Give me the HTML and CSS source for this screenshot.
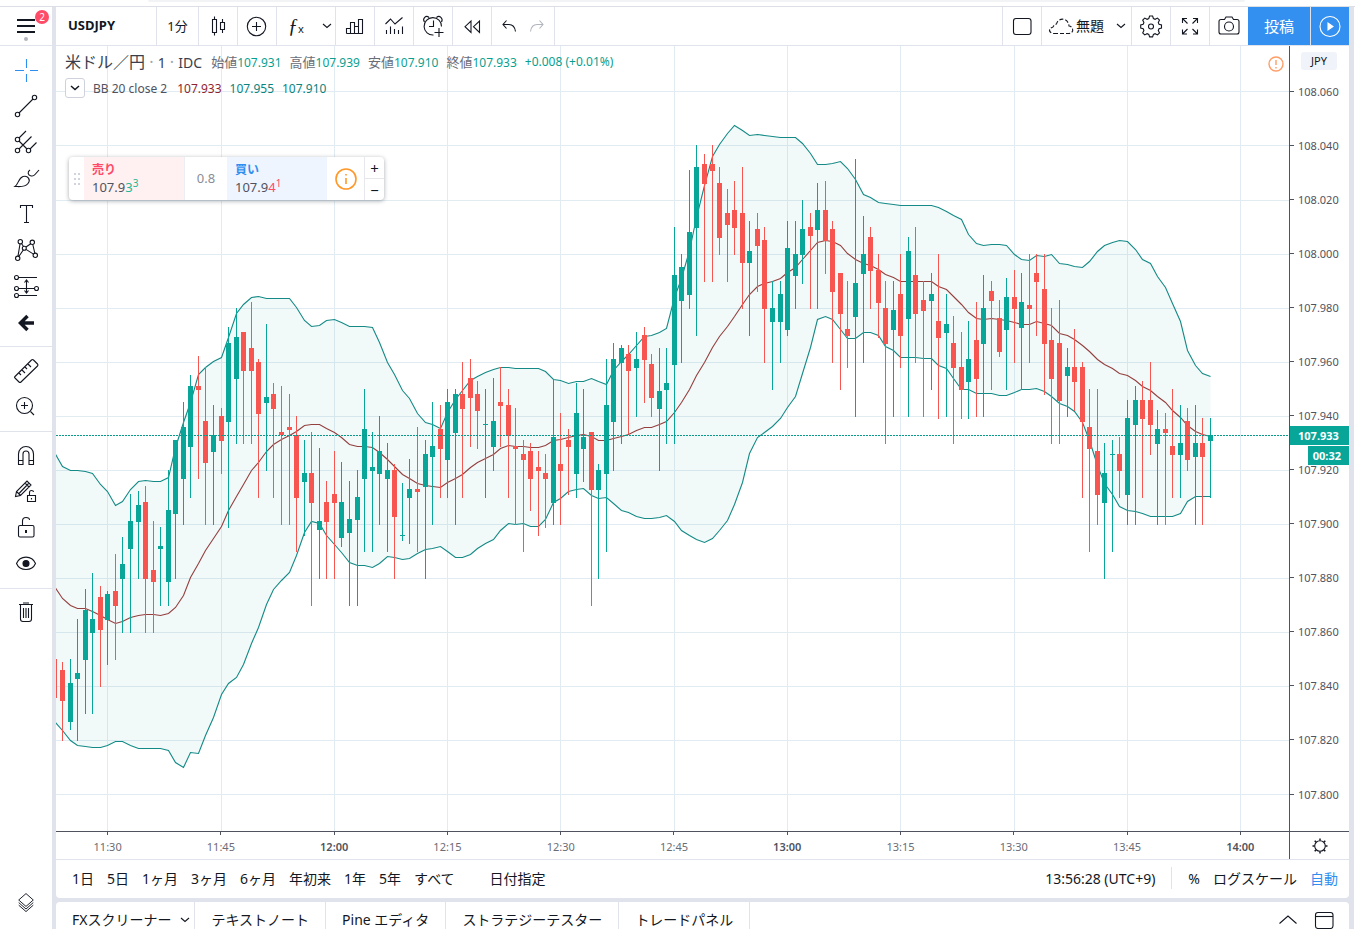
FILE: index.html
```html
<!DOCTYPE html>
<html lang="ja">
<head>
<meta charset="utf-8">
<title>USDJPY</title>
<link rel="stylesheet" href="styles.css">
</head>
<body>
<div class="page-top"><span></span></div>
<div class="app">
  <nav class="sidebar" aria-label="描画ツール">
    <div class="menu-cell">
      <button class="menu" aria-label="メニュー"><svg class="ic" viewBox="0 0 28 28"><path d="M5 8h18M5 14h18M5 20h18" stroke-width="2"/></svg><span class="badge">2</span></button>
      <i class="dot"></i>
    </div>
    <div class="tools">
      <button aria-label="十字"><svg class="ic blue" viewBox="0 0 28 28"><path d="M3 14.500h9M18 14.500h8M14.500 3v9M14.500 18v8"/></svg></button>
      <button aria-label="トレンドライン"><svg class="ic" viewBox="0 0 28 28"><circle cx="22.500" cy="5.500" r="2.200"/><circle cx="5.500" cy="22.500" r="2.200"/><path d="M7 21L21 7"/></svg></button>
      <button aria-label="ピッチフォーク"><svg class="ic" viewBox="0 0 28 28"><circle cx="5.500" cy="11.500" r="2.200"/><circle cx="5.500" cy="22.500" r="2.200"/><circle cx="16.500" cy="22.500" r="2.200"/><path d="M7 13l8 8M7 10l7-7M7 21L19.500 8.500M18 21l6.500-6.500"/></svg></button>
      <button aria-label="ブラシ"><svg class="ic" viewBox="0 0 28 28"><path d="M3 22.500C6.500 20 6.500 14 11 12.500c5-1.500 8 3.500 5 7-3 4-8 3-13 3zM18 6c-3 2-2 5 .5 5.700 2 .6 3.500 0 4.500-1.200l4-4.500"/></svg></button>
      <button aria-label="テキスト"><svg class="ic" viewBox="0 0 28 28"><path d="M8.500 8V5.500h12V8M14.500 5.500v17M12 22.500h5"/></svg></button>
      <button aria-label="パターン"><svg class="ic" viewBox="0 0 28 28"><circle cx="8.300" cy="5.700" r="2.200"/><circle cx="20.300" cy="6.300" r="2.200"/><circle cx="12.300" cy="12.300" r="2"/><circle cx="5.700" cy="22.300" r="2.200"/><circle cx="23.300" cy="19.300" r="2.200"/><path d="M8 8L6 20M9.500 7.500l2 3M14 11l4.800-3.300M20.800 8.500l2 8.600M11.300 14l-4.500 6.500M14 13.400l7.500 4.700"/></svg></button>
      <button aria-label="予測"><svg class="ic" viewBox="0 0 28 28"><circle cx="4.500" cy="5.500" r="2"/><circle cx="4.500" cy="16.500" r="2"/><circle cx="24.500" cy="16.500" r="2"/><circle cx="4.500" cy="23.500" r="2"/><path d="M6.500 5.500H25M6.500 16.500h16M6.500 23.500H25M14.500 8v13M12.500 10.500l2-2.500 2 2.500M12.500 18.500l2 2.500 2-2.500"/></svg></button>
      <button aria-label="戻る"><svg class="ic" viewBox="0 0 28 28"><path d="M15.500 8L8.500 15l7 7M9 15h13" stroke-width="3.500"/></svg></button>
    </div>
    <div class="tools">
      <button aria-label="定規"><svg class="ic" viewBox="0 0 28 28"><path d="M3 20.500L19.500 4q1-1 2 0l4 4q1 1 0 2L9 26q-1 1-2 0l-4-4q-1-.7 0-1.500zM7 17l2 2M10 14l3 3M13 11l2 2M16 8l3 3"/></svg></button>
      <button aria-label="ズームイン"><svg class="ic" viewBox="0 0 28 28"><circle cx="12.500" cy="13.500" r="8"/><path d="M9 13.500h7M12.500 10v7M18.500 19.500l3.500 3.500"/></svg></button>
    </div>
    <div class="tools">
      <button aria-label="マグネット"><svg class="ic" viewBox="0 0 28 28"><path d="M6.500 23.500V13a7.500 7.500 0 0 1 15 0v10.500h-4.500V13a2.800 2.800 0 0 0-6 0v10.500zM6.500 19.500H11M17 19.500h4.500"/></svg></button>
      <button aria-label="描画モード"><svg class="ic" viewBox="0 0 28 28"><path d="M3.500 19.500l1-5L15 4l4 4L8.500 18.500zM4.500 14.500l4 4M7 16.500L17 6M13 6l4 4M15.500 18.500h8v6h-8zM17.500 18.500v-3q0-2 2-2t2 1.500M19.500 21v1.500"/></svg></button>
      <button aria-label="ロック"><svg class="ic" viewBox="0 0 28 28"><rect x="6.500" y="12.500" width="15.500" height="11.500" rx="1.500"/><path d="M10.500 12.500V8q0-3.500 3.500-3.500T17.500 7"/><path d="M14 17v3" stroke-width="2"/></svg></button>
      <button aria-label="表示"><svg class="ic" viewBox="0 0 28 28"><path d="M4.500 14.500C8 6 20 6 23.500 14.500 20 22.500 8 22.500 4.500 14.500z"/><circle cx="14" cy="14.500" r="3" class="solid"/></svg></button>
    </div>
    <div class="tools">
      <button aria-label="削除"><svg class="ic" viewBox="0 0 28 28"><path d="M7 6.500h14M11 5h6M8.500 7v14q0 2.500 2.500 2.500h6q2.500 0 2.500-2.500V7M11.500 10v10M14 10v10M16.500 10v10"/></svg></button>
    </div>
    <button class="layers" aria-label="オブジェクトツリー"><svg class="ic" viewBox="0 0 28 28"><path d="M14 3l8.500 7.500L14 18l-8.500-7.500zM5.500 13.500l8.500 7.500 8.500-7.500M5.500 16.500L14 24l8.500-7.500"/></svg></button>
  </nav>

  <main class="main">
    <header class="toolbar">
      <button class="symbol">USDJPY</button>
      <button class="interval">1分</button>
      <button class="sq" aria-label="チャートタイプ"><svg class="ic" viewBox="0 0 28 28"><path d="M8.500 7.500h4v13h-4zM10.500 4.500v3M10.500 20.500v3M16.500 10.500h4v7h-4zM18.500 7v3.500M18.500 17.500V21"/></svg></button>
      <button class="sq" aria-label="比較"><svg class="ic" viewBox="0 0 28 28"><circle cx="13.500" cy="14.500" r="9.200"/><path d="M13.500 10v9M9 14.500h9"/></svg></button>
      <button class="fx" aria-label="インジケーター"><span>ƒ<small>x</small></span><svg class="chev" viewBox="0 0 10 6"><path d="M1 1l4 3.500L9 1"/></svg></button>
      <button class="sq" aria-label="財務"><svg class="ic" viewBox="0 0 28 28"><path d="M5.500 21.500v-5h4v5M9.500 21.500V10.500h4v11M13.500 14.500h4M17.500 21.500v-14h4v14zM5.500 21.500h16"/></svg></button>
      <button class="sq" aria-label="テンプレート"><svg class="ic" viewBox="0 0 28 28"><path d="M5.500 12l5-5 4.500 5 7.500-6.500M6.500 22v-4M10.500 22v-7.500M14.500 22v-5M18.500 22v-4M22.500 22v-7.500"/></svg></button>
      <button class="sq" aria-label="アラート"><svg class="ic" viewBox="0 0 28 28"><path d="M14.500 23a8.700 8.700 0 1 1 8-8.500M14.500 8.500v6H10M5.500 10C3 6.500 7 2.500 10 5.500M17.500 5.500c3-3 7 1 5 4.500M20 16v9M15.500 20.500h9"/></svg></button>
      <button class="sq" aria-label="リプレイ"><svg class="ic" viewBox="0 0 28 28"><path d="M13 9v11.500L7 14.700zM21.500 9v11.500l-6-5.800z"/></svg></button>
      <div class="history">
        <button aria-label="元に戻す"><svg class="ic" viewBox="0 0 28 28"><path d="M11.500 8.500L8 12.500l3.500 4M8 12.500h6q5.500 0 6.500 7"/></svg></button>
        <button aria-label="やり直し" class="off"><svg class="ic" viewBox="0 0 28 28"><path d="M16.500 8.500l3.500 4-3.500 4M20 12.500h-6Q8.500 12.500 7.500 19.500"/></svg></button>
      </div>
      <span class="fill"></span>
      <button class="sq" aria-label="レイアウト"><svg class="ic" viewBox="0 0 28 28"><rect x="5.500" y="6.500" width="17.500" height="16" rx="2.500"/></svg></button>
      <button class="layout"><svg class="ic" viewBox="0 0 28 28"><path stroke-dasharray="4 2" d="M7 21.500h15c5 0 5-7 0-7.500-1-9-11-8.500-12.500-2-3 0-2.500 3-4.500 3.500-4 1-3 6 2 6z"/></svg><span>無題</span><svg class="chev" viewBox="0 0 10 6"><path d="M1 1l4 3.500L9 1"/></svg></button>
      <button class="sq" aria-label="設定"><svg class="ic" viewBox="0 0 28 28"><path d="M11.800 6.500l.8-2.500h3l.8 2.500 1.700.8 2.400-1.200 2 2-1.200 2.400.7 1.700 2.500.8v3l-2.500.8-.7 1.700 1.200 2.400-2 2-2.400-1.200-1.700.7-.8 2.500h-3l-.8-2.500-1.700-.7-2.400 1.200-2-2 1.200-2.400-.7-1.700-2.500-.8v-3l2.500-.8.7-1.700-1.200-2.400 2-2 2.400 1.200z"/><circle cx="14" cy="14.500" r="2.500"/></svg></button>
      <button class="sq" aria-label="全画面"><svg class="ic" viewBox="0 0 28 28"><path d="M6.500 11V6.500H11M6.500 6.500l5 5M17 6.500h4.500V11M21.500 6.500l-5 5M6.500 17.500V22H11M6.500 22l5-5M17 22h4.500v-4.500M21.500 22l-5-5"/></svg></button>
      <button class="sq camera" aria-label="スナップショット"><svg class="ic" viewBox="0 0 28 28"><path d="M4 9.500q0-2 2-2h3.500l1.500-2.500h6l1.500 2.500H22q2 0 2 2v10.500q0 2-2 2H6q-2 0-2-2z"/><circle cx="14" cy="14.500" r="4.500"/></svg></button>
      <button class="publish">投稿</button>
      <button class="play" aria-label="再生"><svg class="ic" viewBox="0 0 28 28"><circle cx="14" cy="14.500" r="10"/><path class="solid" d="M12 11v7l5-3.500z"/></svg></button>
    </header>

    <section class="chart">
      <div class="plot">
        <svg class="canvas" id="canvas" viewBox="56 46 1233 785" preserveAspectRatio="none"></svg>
        <div class="overlay">
          <div class="legend"><span class="title">米ドル／円 <i>·</i> <b>1</b> <i>·</i> <b>IDC</b></span><span class="ohlc"><span>始値<em>107.931</em></span><span>高値<em>107.939</em></span><span>安値<em>107.910</em></span><span>終値<em>107.933</em></span><em>+0.008 (+0.01%)</em></span></div>
          <div class="study"><button aria-label="折りたたむ"><svg class="chev" viewBox="0 0 10 6"><path d="M1 1l4 3.500L9 1"/></svg></button><span class="name">BB 20 close 2</span><span class="mid">107.933</span><span class="band">107.955</span><span class="band">107.910</span></div>
          <div class="trade">
            <svg class="grip" viewBox="0 0 8 14"><path d="M1 2h2M5 2h2M1 7h2M5 7h2M1 12h2M5 12h2"/></svg>
            <button class="sell"><b>売り</b><span>107.9<i>3<sup>3</sup></i></span></button>
            <span class="spread">0.8</span>
            <button class="buy"><b>買い</b><span>107.9<i>4<sup>1</sup></i></span></button>
            <button class="info" aria-label="情報"><svg class="ic" viewBox="0 0 28 28"><circle cx="14" cy="14" r="10"/><path d="M14 13v6M14 9v1.500"/></svg></button>
            <div class="qty"><button>+</button><button>−</button></div>
          </div>
        </div>
        <svg class="warn" viewBox="0 0 16 16"><circle cx="8" cy="8" r="7"/><path d="M8 4v5M8 11v1.500"/></svg>
      </div>
      <div class="price-axis">
        <div class="prices" id="prices"></div>
        <button class="currency">JPY</button>
        <div class="flag"><b>107.933</b><b>00:32</b></div>
      </div>
      <div class="time-axis"><div class="times" id="times"></div></div>
      <button class="axis-set" aria-label="軸の設定"><svg class="ic" viewBox="0 0 28 28"><circle cx="14" cy="14" r="5.300"/><path d="M14 6.500v2M14 19.500v2M6.500 14h2M19.500 14h2M8.700 8.700l1.400 1.400M17.900 17.900l1.400 1.400M8.700 19.300l1.400-1.400M17.900 10.100l1.400-1.400" stroke-width="1.500"/></svg></button>
    </section>

    <footer class="ranges">
      <button>1日</button><button>5日</button><button>1ヶ月</button><button>3ヶ月</button><button>6ヶ月</button><button>年初来</button><button>1年</button><button>5年</button><button>すべて</button><button class="goto">日付指定</button>
      <span class="fill"></span>
      <button>13:56:28 (UTC+9)</button><span class="rule"></span><button>%</button><button>ログスケール</button><button class="auto">自動</button>
    </footer>

    <section class="tabs">
      <button>FXスクリーナー<svg class="chev" viewBox="0 0 10 6"><path d="M1 1l4 3.500L9 1"/></svg></button><button>テキストノート</button><button>Pine エディタ</button><button>ストラテジーテスター</button><button>トレードパネル</button>
      <span class="fill"></span>
      <div class="panel-ctl"><svg class="ic" viewBox="0 0 28 28"><path d="M5.500 17.500L14 10l8.500 7.500"/></svg><svg class="ic" viewBox="0 0 28 28"><rect x="5.500" y="6.500" width="17.500" height="16" rx="2.500"/><path d="M5.500 10.500H23"/></svg></div>
    </section>
  </main>
</div>
<script src="chart.js"></script>
</body>
</html>
```

FILE: styles.css
```css
* { box-sizing: border-box; }
body {
  margin: 0; height: 100vh; overflow: hidden; display: flex; flex-direction: column;
  font-family: "Noto Sans", "Noto Sans CJK JP", sans-serif; font-size: 13px; color: #131722; background: #fff;
}
button { border: 0; background: none; padding: 0; font: inherit; color: inherit; cursor: pointer; display: flex; align-items: center; justify-content: center; white-space: nowrap; }
svg { display: block; flex: none; }
.ic { width: 28px; height: 28px; fill: none; stroke: #131722; stroke-width: 1.1; }
.ic .solid { fill: #131722; }
.blue { stroke: #2f8ff0; }
.chev { width: 10px; height: 6px; fill: none; stroke: #131722; stroke-width: 1.1; }
.fill { flex: 1; }
i, em { font-style: normal; }

.page-top { flex: none; height: 7px; padding: 0 110px 0 148px; border-bottom: 1px solid #dcdfe5; }
.page-top span { display: block; height: 2px; background: #f1f3f4; border-radius: 0 0 4px 4px; }
.app { flex: 1; min-height: 0; display: grid; grid-template-columns: 52px minmax(0, 1fr); column-gap: 4px; padding-right: 5px; background: #e0e3eb; border-right: 1px solid #fff; }

.sidebar { display: flex; flex-direction: column; background: #fff; }
.menu-cell { flex: none; height: 39px; border-bottom: 1px solid #e0e3eb; position: relative; padding: 5px 12px; }
.menu { position: relative; }
.badge { position: absolute; left: 23px; top: -2px; width: 14px; height: 14px; border-radius: 50%; background: #ff4a68; color: #fff; font-size: 10px; line-height: 14px; }
.dot { position: absolute; left: 24px; bottom: 4px; width: 4px; height: 4px; border-radius: 50%; background: #b2b5be; }
.tools { flex: none; padding: 6px 0; border-bottom: 1px solid #e0e3eb; }
.tools + .tools { padding: 5px 0 7px; }
.tools:nth-of-type(5) { border: 0; }
.tools button { width: 100%; height: 36px; }
.layers { margin-top: auto; height: 52px; }
.layers .ic { width: 24px; height: 24px; }

.main { min-width: 0; display: flex; flex-direction: column; }
.toolbar { flex: none; height: 39px; display: flex; background: #fff; border-bottom: 1px solid #e0e3eb; }
.toolbar > button, .history { border-right: 1px solid #e0e3eb; }
.symbol { width: 101px; padding-left: 12px; justify-content: flex-start; font-weight: 700; }
.interval { width: 42px; }
.symbol, .interval, .layout span, .publish { padding-bottom: 2px; }
.sq { width: 39px; }
.fx { width: 59px; gap: 18px; padding-left: 8px; }
.fx span { font: italic 20px "Liberation Serif", serif; line-height: 24px; }
.fx small { font: 11px "Noto Sans", sans-serif; }
.history { width: 63px; display: flex; padding-left: 3px; }
.history .off .ic { stroke: #b2b5be; }
.fill + .sq { width: 40px; border-left: 1px solid #e0e3eb; }
.layout { width: 90px; font-size: 14px; gap: 1px; }
.layout .chev { margin-left: 11px; }
.toolbar > .camera { width: 38px; border-right: 0; }
.toolbar > .publish, .toolbar > .play { background: #338ff0; color: #fff; font-size: 15px; }
.publish { width: 63px; }
.play { width: 38px; }
.toolbar > .play { border-right: 0; }
.play .ic { stroke: #fff; }
.play .ic .solid { fill: #fff; }

.chart { flex: 1; min-height: 0; display: grid; grid-template-columns: minmax(0, 1fr) 60px; grid-template-rows: minmax(0, 1fr) 28px; background: #fff; }
.plot { position: relative; min-height: 0; }
.canvas { width: 100%; height: 100%; }
.grid { stroke: #e1ecf2; shape-rendering: crispEdges; }
.area { fill: #008080; fill-opacity: .05; stroke: none; }
.line { fill: none; stroke: #138a86; stroke-width: 1.1; }
.line.basis { stroke: #93403f; }
.up { fill: #08a698; shape-rendering: crispEdges; }
.down { fill: #f7554f; shape-rendering: crispEdges; }
.now { stroke: #08998c; stroke-dasharray: 2 1; shape-rendering: crispEdges; }

.overlay { position: absolute; left: 9px; top: 4px; }
.legend { display: flex; align-items: center; height: 24px; gap: 9px; white-space: nowrap; }
.title { font-size: 16px; line-height: 24px; color: #3a3e4a; }
.title i { color: #a3a6af; }
.title b { font-weight: 400; font-size: 14px; }
.ohlc { display: flex; gap: 8px; color: #6a6d78; line-height: 24px; }
.ohlc em { font-size: 12px; color: #089f91; }
.study { display: flex; align-items: center; gap: 8px; height: 20px; margin-top: 4px; font-size: 12px; color: #50535e; }
.study button { width: 20px; height: 20px; border: 1px solid #cfd2dc; border-radius: 3px; background: #fff; }
.study .chev { stroke-width: 1.5; }
.mid { color: #8f2430; margin-left: 2px; }
.band { color: #0b8480; }
.trade { display: flex; width: 315px; height: 43px; margin: 59px 0 0 4px; background: #fff; border-radius: 4px; box-shadow: 0 1px 4px rgba(60, 64, 80, .45); overflow: hidden; color: #50535e; }
.grip { width: 8px; height: 14px; margin: 15px 3px 0 4px; stroke: #d1d4dc; stroke-width: 2; }
.sell, .buy { width: 100px; flex-direction: column; align-items: flex-start; padding-left: 8px; line-height: 18px; }
.trade b { font-size: 12px; line-height: 17px; }
.sell { background: #fff0f2; }
.sell b { color: #ff4a68; }
.sell i { color: #22b893; }
.buy { background: #eff5ff; }
.buy b { color: #2f8ff0; }
.buy i { color: #ff4a68; }
.trade sup { font-size: 10px; line-height: 9px; }
.spread { width: 43px; line-height: 43px; text-align: center; color: #8a8d96; border-left: 1px solid #eceef3; }
.info { width: 38px; border-right: 1px solid #e6e8ee; }
.info .ic { stroke: #ff9829; stroke-width: 1.6; }
.qty { flex: 1; display: flex; flex-direction: column; }
.qty button { flex: 1; width: 100%; font-size: 15px; line-height: 18px; color: #131722; }
.qty button + button { border-top: 1px solid #e6e8ee; }
.warn { position: absolute; right: 5px; top: 10px; width: 16px; height: 16px; fill: none; stroke: #ff9d66; stroke-width: 1.4; }

.price-axis { position: relative; border-left: 1px solid #50535e; min-height: 0; color: #50535e; font-size: 11px; }
.prices { height: 100%; padding: 18px 0 10px; display: flex; flex-direction: column; }
.prices span { flex: 1; display: flex; align-items: center; gap: 4px; }
.prices span::before { content: ""; width: 4px; height: 1px; background: #50535e; }
.currency { position: absolute; left: 11px; top: 6px; width: 36px; height: 18px; padding-bottom: 1px; border-radius: 3px; background: #f0f3fa; color: #131722; }
.flag { position: absolute; left: 0; right: 0; top: 48.400%; display: flex; flex-direction: column; align-items: flex-end; gap: 1px; color: #fff; }
.flag b { height: 19px; line-height: 19px; padding: 0 8px 0 5px; background: #08a698; }
.flag b:first-child { width: 100%; padding-left: 8px; }
.time-axis { border-top: 1px solid #50535e; overflow: hidden; color: #6a6d78; font-size: 11px; }
.times { display: flex; margin: 0 -8px 0 -5px; }
.times span { flex: 1; display: flex; flex-direction: column; align-items: center; line-height: 23px; }
.times span::before { content: ""; width: 1px; height: 3px; background: #50535e; }
.times span.hour { font-weight: 600; color: #50535e; }
.axis-set { border-top: 1px solid #50535e; border-left: 1px solid #50535e; }

.ranges { flex: none; height: 39px; display: flex; align-items: center; gap: 13px; padding: 0 11px 2px 16px; background: #fff; border-top: 1px solid #e0e3eb; border-radius: 0 0 4px 4px; font-size: 14px; }
.goto { margin-left: 22px; }
.rule { width: 1px; height: 22px; background: #e0e3eb; margin: 0 3px; }
.auto { color: #2f8ff0; }
.tabs { flex: none; height: 27px; margin-top: 4px; display: flex; background: #fff; border-radius: 4px 4px 0 0; font-size: 14px; line-height: 16px; }
.tabs button { padding: 9px 16px 0; border-right: 1px solid #e0e3eb; }
.tabs button:first-child { padding-right: 4px; gap: 9px; }
.panel-ctl { display: flex; align-items: flex-start; gap: 8px; padding: 4px 11px 0 0; }
```

FILE: chart.js
```js
// One row per minute from 11:23: direction, high, low, body top, body bottom (plot units).
const candles = `
R 659 698 659 698|R 662 741 670 701|G 659 730 683 722|G 619 741 673 679|G 589 714 610 660|G 573 714 619 633|R 586 687 597 630
G 591 665 594 620|R 554 660 591 606|G 537 633 564 579|G 494 633 521 549|G 491 579 505 522|R 486 633 502 579|R 521 633 570 582
G 527 606 546 549|G 470 606 510 582|G 440 579 440 514|G 402 525 427 479|G 375 498 386 447|R 356 479 386 390|R 367 525 421 463
G 405 525 435 452|R 408 474 416 441|G 327 528 343 422|G 308 444 337 379|R 332 444 332 371|R 302 444 348 371|R 359 498 362 414
G 324 471 397 403|R 383 498 394 409|R 386 525 432 435|R 394 525 427 430|R 416 552 435 498|G 440 536 473 482|R 432 606 473 503
G 448 579 521 530|R 481 579 502 522|R 451 579 494 503|G 462 547 502 538|G 481 606 519 533|G 470 606 497 520|G 389 552 429 479
G 432 552 467 471|G 416 525 451 474|G 443 552 470 479|R 464 579 470 517|G 483 541 535 536|G 459 544 489 498|R 427 552 489 492
G 440 579 454 487|G 402 525 446 457|R 405 498 429 449|G 389 498 402 460|G 389 525 394 433|R 362 498 394 409|R 359 447 378 398
R 381 449 394 411|G 389 498 424 425|G 378 471 421 447|R 367 447 402 406|R 389 498 405 436|R 408 525 446 449|R 440 552 454 460
R 443 511 451 479|R 451 536 467 471|R 454 528 473 479|G 379 525 437 503|R 413 525 464 471|R 429 495 440 447|G 383 498 413 474
G 389 482 437 449|R 432 606 432 490|G 464 579 470 490|G 359 552 405 474|G 343 471 359 422|G 345 444 348 363|R 345 434 354 371
G 332 417 359 368|R 327 403 335 360|R 354 417 364 398|G 348 471 391 409|G 348 444 383 390|G 227 444 275 365|G 254 363 267 301
G 170 309 232 295|G 145 336 167 228|R 154 282 164 184|R 145 282 164 171|R 167 255 183 238|R 189 282 213 225|R 181 255 210 228
R 167 309 213 263|G 221 336 251 263|R 213 292 229 246|R 227 363 240 309|G 281 390 308 322|G 281 363 294 322|G 221 336 248 330
G 221 309 254 276|G 200 284 229 255|R 213 309 227 236|G 183 309 210 230|R 181 274 210 241|R 221 363 229 292|R 273 390 273 314
R 281 368 329 336|G 159 417 283 317|G 216 363 254 274|R 227 309 237 271|R 254 338 270 303|R 281 444 308 344|G 281 417 310 330
R 254 368 294 336|G 237 417 251 319|R 227 363 275 314|R 281 417 300 311|G 273 390 294 301|R 254 419 321 338|G 294 417 324 333
R 316 444 343 368|R 332 419 367 390|G 321 419 359 382|R 302 417 340 379|G 275 417 308 344|R 281 390 291 301|R 300 357 318 352
G 278 390 297 330|R 270 363 297 309|G 273 390 302 328|R 254 363 305 309|R 254 336 273 282|R 254 395 289 344|R 308 444 340 379
R 300 444 343 401|G 348 417 367 376|R 329 411 367 382|R 362 498 367 422|R 389 552 427 449|R 389 525 451 495|G 443 579 473 503
G 440 552 454 455|R 437 498 454 471|G 400 525 418 495|G 386 525 400 425|R 381 498 400 419|R 362 455 400 425|G 410 525 429 444
R 413 525 429 433|R 389 498 446 455|G 405 498 443 455|R 408 471 421 460|G 405 525 443 457|R 418 525 443 457|G 418 498 435 441
`.trim().split(/[|\n]/).map(r => r.split(" "));

const upper = [452,466,470,470,471,473,484,491,505,501,489,481,480,481,481,477,447,422,402,374,367,361,357,337,313,304,297,296,298,298,298,298,307,320,326,325,320,319,322,326,326,326,327,342,362,374,390,398,413,422,424,428,412,399,390,380,376,372,369,367,367,368,368,368,368,371,379,380,383,381,381,378,381,384,370,361,354,345,336,335,332,328,297,278,250,217,185,156,144,133,125,130,135,134,135,136,137,137,137,143,153,164,164,163,161,168,179,194,197,202,203,204,205,205,205,205,205,207,211,215,219,234,243,245,244,244,245,254,259,260,255,256,254,263,264,266,267,261,251,245,242,240,241,249,259,263,276,287,303,321,350,365,373,376];
const basis = [586,598,605,608,608,611,615,619,623,621,617,615,614,614,615,613,607,595,577,563,550,538,526,510,496,484,470,462,451,444,439,435,431,425,424,424,428,432,437,444,446,446,447,452,459,466,474,478,483,485,486,487,482,478,474,467,462,458,454,448,445,446,446,447,447,445,440,439,437,435,434,436,440,440,438,436,434,430,427,427,424,421,412,402,389,375,362,347,336,326,316,304,294,286,283,281,278,272,267,259,250,242,240,241,245,253,259,263,265,269,274,277,281,281,281,281,281,286,289,296,304,312,318,319,318,319,320,322,324,324,321,323,325,333,335,339,345,351,359,364,368,373,375,380,386,390,396,402,410,417,425,431,434,436];
const lower = [721,730,740,745,746,747,747,745,741,741,745,748,748,748,748,750,762,767,752,753,735,717,694,683,677,664,643,627,604,589,580,572,555,532,521,523,535,544,552,562,565,565,567,563,556,557,559,558,553,549,548,546,551,557,557,554,548,543,539,530,523,524,523,526,526,519,502,498,491,489,488,495,498,497,503,510,512,516,518,518,517,515,521,530,535,539,542,538,530,520,504,482,453,437,432,426,418,407,396,373,347,319,316,319,329,338,338,332,332,335,346,350,357,357,357,358,358,365,368,378,389,389,393,393,393,395,395,392,389,389,388,391,396,403,406,411,422,440,465,483,494,506,510,511,513,516,516,516,516,513,501,496,496,496];

const xAt = n => Math.round(107.3 + 7.553 * (n - 7));
const points = series => series.map((y, n) => `${xAt(n) + 0.5},${y + 0.5}`);
const tags = [];

for (let n = 0; n < 14; n++) {
  const y = Math.round(91.4 + 54.08 * n) + 0.5;
  tags.push(`<path class="grid" d="M56 ${y}H1289"/>`);
}
for (let n = 0; n < 11; n++) {
  const x = xAt(7 + n * 15) + 0.5;
  tags.push(`<path class="grid" d="M${x} 46V831"/>`);
}

tags.push(`<polygon class="area" points="${points(upper).concat(points(lower).reverse()).join(" ")}"/>`);
tags.push(`<polyline class="line" points="${points(upper).join(" ")}"/>`);
tags.push(`<polyline class="line" points="${points(lower).join(" ")}"/>`);
tags.push(`<polyline class="line basis" points="${points(basis).join(" ")}"/>`);

candles.forEach(([dir, high, low, top, bottom], n) => {
  const x = xAt(n);
  tags.push(`<path class="${dir === "G" ? "up" : "down"}" d="M${x} ${high}h1V${low}h-1zM${x - 2} ${top}h5V${bottom}h-5z"/>`);
});
tags.push('<path class="now" d="M56 435.500H1289"/>');
document.getElementById("canvas").innerHTML = tags.join("");

let prices = "";
for (let p = 108060; p >= 107800; p -= 20) prices += `<span>${(p / 1000).toFixed(3)}</span>`;
document.getElementById("prices").innerHTML = prices;

let times = "";
for (let m = 690; m <= 840; m += 15) {
  const mm = String(m % 60).padStart(2, "0");
  times += `<span${m % 60 ? "" : ' class="hour"'}>${Math.floor(m / 60)}:${mm}</span>`;
}
document.getElementById("times").innerHTML = times;
```
